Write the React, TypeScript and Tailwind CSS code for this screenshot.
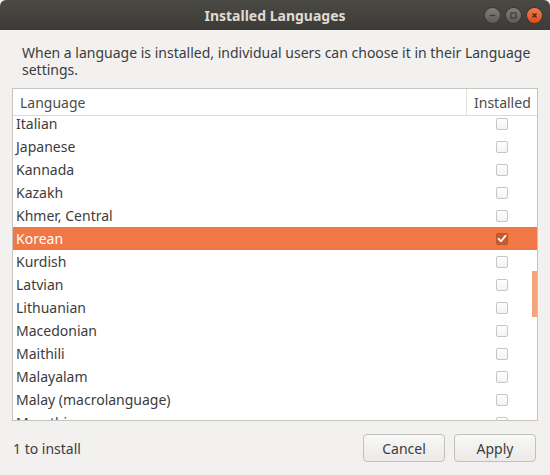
import React from 'react'

const languages = [
	'Italian',
	'Japanese',
	'Kannada',
	'Kazakh',
	'Khmer, Central',
	'Korean',
	'Kurdish',
	'Latvian',
	'Lithuanian',
	'Macedonian',
	'Maithili',
	'Malayalam',
	'Malay (macrolanguage)',
	'Marathi'
]

const Checkbox = ({ checked }: { checked: boolean }) =>
	checked ? (
		<div className="flex h-[12px] w-[12px] items-center justify-center rounded-[2px] border border-[#b9532a] bg-[#c85a2f]">
			<svg width="10" height="9" viewBox="0 0 10 9">
				<path d="M1.5 4.8 L4 7.2 L8.6 1.6" fill="none" stroke="#ffffff" strokeWidth="1.8" strokeLinecap="round" strokeLinejoin="round" />
			</svg>
		</div>
	) : (
		<div className="h-[12px] w-[12px] rounded-[2px] border border-[#c8c6c3] bg-gradient-to-b from-[#ffffff] to-[#f4f3f2]" />
	)

const WinButton = ({ kind }: { kind: 'min' | 'max' | 'close' }) => (
	<div
		className={
			kind === 'close'
				? 'flex h-[15px] w-[15px] items-center justify-center rounded-full bg-gradient-to-b from-[#f07c4c] to-[#df4a16] shadow-[0_0_0_1px_#3a3935]'
				: 'flex h-[15px] w-[15px] items-center justify-center rounded-full bg-gradient-to-b from-[#807e79] to-[#5e5c58] shadow-[0_0_0_1px_#3a3935]'
		}
	>
		<svg width="9" height="9" viewBox="0 0 10 10">
			{kind === 'min' && <path d="M2 5 H8" stroke="#3b3a36" strokeWidth="1.4" />}
			{kind === 'max' && <rect x="2.2" y="2.2" width="5.6" height="5.6" fill="none" stroke="#3b3a36" strokeWidth="1.3" />}
			{kind === 'close' && <path d="M2.8 2.8 L7.2 7.2 M7.2 2.8 L2.8 7.2" stroke="#3b2a22" strokeWidth="1.4" />}
		</svg>
	</div>
)

export default function App() {
	return (
		<div
			className="flex h-[475px] w-[550px] flex-col overflow-hidden bg-[#f2f1f0] text-[#3c3c3c]"
			style={{ fontFamily: '"Noto Sans", "Open Sans", sans-serif' }}
		>
			<div className="relative flex h-[30px] items-center justify-center rounded-t-[6px] bg-gradient-to-b from-[#4a4944] to-[#3c3b37]">
				<span className="text-[14px] font-bold text-[#dfdbd2]">Installed Languages</span>
				<div className="absolute right-[8px] top-[8px] flex gap-[6px]">
					<WinButton kind="min" />
					<WinButton kind="max" />
					<WinButton kind="close" />
				</div>
			</div>

			<div className="flex flex-1 flex-col pl-[12px] pr-[12px]">
				<p className="mt-[14px] pl-[10px] text-[14px] leading-[17px] text-[#3c3c3c]">
					When a language is installed, individual users can choose it in their Language settings.
				</p>

				<div className="mt-[10px] flex h-[333px] flex-col border border-[#c7c5c2] bg-white">
					<div className="flex h-[27px] shrink-0 border-b border-[#dcdad7] text-[14px] text-[#4c4c4c]">
						<div className="flex flex-1 items-center pl-[7px]">Language</div>
						<div className="flex w-[71px] items-center border-l border-[#e4e2df] pl-[7px]">Installed</div>
					</div>
					<div className="relative flex-1 overflow-hidden">
						<div className="-mt-[4px] flex flex-col">
							{languages.map((lang) => {
								const selected = lang === 'Korean'
								return (
									<div
										key={lang}
										className={
											selected
												? 'flex h-[23px] items-center bg-[#f07746] text-[14px] text-white'
												: 'flex h-[23px] items-center text-[14px] text-[#3c3c3c]'
										}
									>
										<span className="flex-1 pl-[3px]">{lang}</span>
										<div className="flex w-[71px] justify-center pl-[1px]">
											<Checkbox checked={selected} />
										</div>
									</div>
								)
							})}
						</div>
						<div className="absolute right-[0px] top-[155px] h-[46px] w-[5px] bg-[#f4a57c]" />
					</div>
				</div>

				<div className="mt-[13px] flex items-center justify-between pr-[2px]">
					<span className="pl-[1px] text-[14px] text-[#3c3c3c]">1 to install</span>
					<div className="flex gap-[9px]">
						<button className="h-[28px] w-[82px] rounded-[4px] border border-[#c2c0bd] bg-gradient-to-b from-[#f8f8f7] to-[#ebeae8] text-[14px] text-[#3c3c3c]">
							Cancel
						</button>
						<button className="h-[28px] w-[82px] rounded-[4px] border border-[#c2c0bd] bg-gradient-to-b from-[#f8f8f7] to-[#ebeae8] text-[14px] text-[#3c3c3c]">
							Apply
						</button>
					</div>
				</div>
			</div>
		</div>
	)
}
